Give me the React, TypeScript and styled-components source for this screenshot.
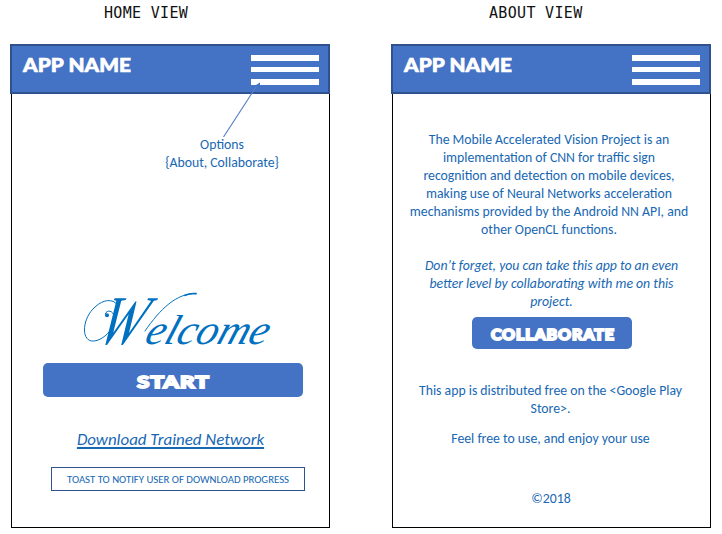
import React from "react";
import styled, { createGlobalStyle } from "styled-components";

const BLUE = "#4472c4";
const EDGE = "#2f528f";
const INK = "#1767b3";

const GlobalStyle = createGlobalStyle`
  body { margin: 0; background: #fff; }
  * { box-sizing: border-box; }
`;

const Board = styled.main`
  display: flex;
  gap: 61px;
  width: 722px;
  height: 534px;
  padding-left: 10px;
  overflow: hidden;
  background: #fff;
  font-family: Calibri, Carlito, Lato, sans-serif;
  color: ${INK};
`;

const View = styled.section`
  display: flex;
  flex-direction: column;
  width: 320px;
`;

const ViewLabel = styled.h2<{ $inset: number }>`
  height: 44px;
  margin: 0;
  padding-left: ${(p) => p.$inset}px;
  font: 400 15px/26px "DejaVu Sans Mono", monospace;
  letter-spacing: 0.32px;
  color: #111;
  white-space: nowrap;
`;

const AppBar = styled.header`
  position: relative;
  display: flex;
  justify-content: space-between;
  align-items: flex-start;
  flex: none;
  height: 50px;
  padding: 9px 9px 0 11px;
  border: 2px solid ${EDGE};
  background: ${BLUE};
`;

const AppName = styled.h1`
  margin: -1px 0 0;
  font: 900 19.5px/22px Lato, sans-serif;
  letter-spacing: 0.1px;
  color: #fff;
  -webkit-text-stroke: 0.7px #fff;
  white-space: nowrap;
  transform: scaleX(1.065);
  transform-origin: left;
`;

const Menu = styled.div`
  display: grid;
  grid-template-rows: repeat(3, 6px);
  row-gap: 6px;
  width: 68px;
`;

const MenuBar = styled.span`
  background: #fff;

  &:nth-child(2) {
    height: 5px;
  }
`;

const Connector = styled.svg`
  position: absolute;
  left: 208px;
  top: 34px;
`;

const Screen = styled.div`
  display: flex;
  flex-direction: column;
  align-items: center;
  width: 319px;
  height: 434px;
  margin-left: 1px;
  border: 1px solid #000;
  border-top: 0;
`;

const TextBlock = styled.p<{ $top: number; $shift?: number; $italic?: boolean }>`
  margin: ${(p) => p.$top}px 0 0 ${(p) => p.$shift ?? 0}px;
  font-size: 13.75px;
  line-height: 18.1px;
  font-style: ${(p) => (p.$italic ? "italic" : "normal")};
  text-align: center;
`;

const Line = styled.span`
  display: block;
  white-space: nowrap;
`;

const Welcome = styled.div`
  position: relative;
  display: flex;
  align-items: baseline;
  width: 230px;
  height: 90px;
  margin: 104px 0 0 9px;
  color: #0070c0;
  font-family: "Edwardian Script ITC", "Liberation Serif", serif;
  font-style: italic;
`;

const Initial = styled.span`
  margin-left: 33px;
  font-size: 70px;
  line-height: 90px;
  transform: scaleX(0.74) skewX(-26deg);
  transform-origin: left 80%;
`;

const Script = styled.span`
  margin-left: -8px;
  font-size: 40px;
  transform: scale(1.08, 1.05) skewX(-18deg);
  transform-origin: left 80%;
`;

const Flourish = styled.svg`
  position: absolute;
  left: 0;
  top: 0;
`;

const Button = styled.button<{ $w: number; $h: number; $top: number; $shift: number }>`
  display: flex;
  align-items: center;
  justify-content: center;
  flex: none;
  width: ${(p) => p.$w}px;
  height: ${(p) => p.$h}px;
  margin: ${(p) => p.$top}px 0 0 ${(p) => p.$shift}px;
  padding: 0;
  border: 0;
  border-radius: 5px;
  background: ${BLUE};
`;

const ButtonText = styled.span<{ $size: number; $stretch: number }>`
  font: 900 ${(p) => p.$size}px/1 Lato, sans-serif;
  color: #fff;
  -webkit-text-stroke: 1.8px #fff;
  letter-spacing: 0.8px;
  transform: translate(1px, 2px) scaleX(${(p) => p.$stretch});
`;

const Download = styled.a`
  margin: 33px 0 0;
  font-size: 16.9px;
  line-height: 20px;
  font-style: italic;
  white-space: nowrap;
  text-decoration: underline;
  text-decoration-thickness: 1.5px;
  text-underline-offset: 2px;
  text-decoration-skip-ink: none;
`;

const Toast = styled.div`
  display: flex;
  align-items: center;
  justify-content: center;
  width: 254px;
  height: 24px;
  margin: 17px 0 0 15px;
  border: 1px solid ${EDGE};
  font-size: 10.75px;
  white-space: nowrap;
`;

function Header({ children }: { children?: React.ReactNode }) {
  return (
    <AppBar>
      <AppName>APP NAME</AppName>
      <Menu>
        <MenuBar />
        <MenuBar />
        <MenuBar />
      </Menu>
      {children}
    </AppBar>
  );
}

export default function App() {
  return (
    <>
      <GlobalStyle />
      <Board>
        <View>
          <ViewLabel $inset={94}>HOME VIEW</ViewLabel>
          <Header>
            <Connector width="50" height="60" viewBox="0 0 50 60">
              <path d="M3.5 57L36 7" stroke="#5b7fc6" strokeWidth="1.2" />
              <path d="M33 7L40 2.5V5L38.5 7Z" fill={BLUE} />
            </Connector>
          </Header>
          <Screen>
            <TextBlock $top={42} $shift={103}>
              <Line>Options</Line>
              <Line>{"{About, Collaborate}"}</Line>
            </TextBlock>
            <Welcome>
              <Initial>W</Initial>
              <Script>elcome</Script>
              <Flourish width="230" height="90" viewBox="0 0 690 270" fill="none" stroke="#0070c0" strokeLinecap="round">
                <circle cx="141" cy="118" r="6" fill="#0070c0" stroke="none" />
                <path d="M136 114C140 99 160 104 163 122C168 155 128 198 95 195C62 190 68 125 105 93C130 70 158 67 172 86" strokeWidth="3" />
                <path d="M255 165C300 100 350 50 408 53" strokeWidth="3" />
                <path d="M375 58Q392 51 408 53" strokeWidth="5" />
              </Flourish>
            </Welcome>
            <Button $w={260} $h={34} $top={-3} $shift={4}>
              <ButtonText $size={17.5} $stretch={1.28}>START</ButtonText>
            </Button>
            <Download>Download Trained Network</Download>
            <Toast>TOAST TO NOTIFY USER OF DOWNLOAD PROGRESS</Toast>
          </Screen>
        </View>
        <View>
          <ViewLabel $inset={98}>ABOUT VIEW</ViewLabel>
          <Header />
          <Screen>
            <TextBlock $top={37} $shift={-5}>
              <Line>The Mobile Accelerated Vision Project is an</Line>
              <Line>implementation of CNN for traffic sign</Line>
              <Line>recognition and detection on mobile devices,</Line>
              <Line>making use of Neural Networks acceleration</Line>
              <Line>mechanisms provided by the Android NN API, and</Line>
              <Line>other OpenCL functions.</Line>
            </TextBlock>
            <TextBlock $top={17} $italic>
              <Line>Don’t forget, you can take this app to an even</Line>
              <Line>better level by collaborating with me on this</Line>
              <Line>project.</Line>
            </TextBlock>
            <Button $w={160} $h={32} $top={6} $shift={0}>
              <ButtonText $size={15} $stretch={1.07}>COLLABORATE</ButtonText>
            </Button>
            <TextBlock $top={33} $shift={-2}>
              <Line>This app is distributed free on the &lt;Google Play</Line>
              <Line>Store&gt;.</Line>
            </TextBlock>
            <TextBlock $top={12} $shift={-2}>
              <Line>Feel free to use, and enjoy your use</Line>
            </TextBlock>
            <TextBlock $top={42} $shift={-1}>
              <Line>©2018</Line>
            </TextBlock>
          </Screen>
        </View>
      </Board>
    </>
  );
}
